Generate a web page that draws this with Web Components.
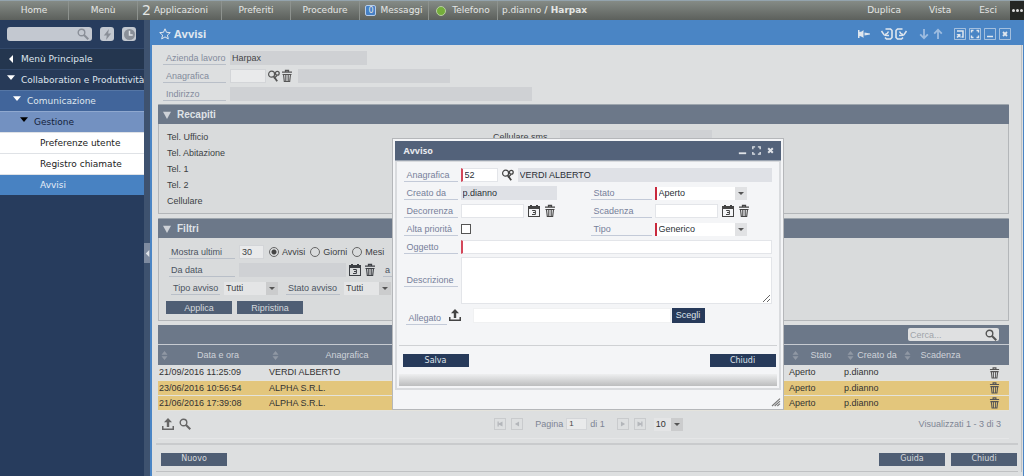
<!DOCTYPE html>
<html lang="it">
<head>
<meta charset="utf-8">
<title>Avvisi</title>
<style>
body { margin: 0; background: #dddfe0; font: 9px/12px "Liberation Sans", Arial, sans-serif; }
</style>
</head>
<body>
<crm-app></crm-app>
<script>
const base = `
*, *::before, *::after { box-sizing: border-box; }
:host([hidden]) { display: none; }
button, input, select, textarea { font: inherit; color: inherit; margin: 0; padding: 0; border: 0; border-radius: 0; }
button { background: none; display: inline-flex; align-items: center; justify-content: center; }
a { color: inherit; text-decoration: none; }
`;

const controls = `
.row { display: flex; align-items: center; height: 18px; }
.lbl { display: block; flex: none; height: 14px; line-height: 15px; padding-left: 3px; color: #838b9c; border-bottom: 1px solid #b9bfc8; white-space: nowrap; }
.box { height: 14px; min-width: 0; padding: 0 2px; background: #e9eaeb; border: 1px solid #d3d5d8; }
.ro { background: #cfd1d4; border: 0; color: #444; }
.sel { position: relative; display: inline-grid; grid-template-columns: 1fr 12px; height: 13px; background: #e4e5e6; align-items: center; }
.sel select { grid-area: 1 / 1 / 2 / 3; appearance: none; background: none; height: 13px; padding-left: 2px; line-height: 13px; }
.sel::after { content: ""; grid-area: 1 / 2; height: 13px; pointer-events: none; background: #cbcccd; }
.sel::before { content: ""; position: absolute; right: 3px; top: 5px; border: 3px solid transparent; border-top-color: #555; border-bottom: 0; pointer-events: none; z-index: 1; }
.btn { width: 66px; height: 13px; background: #4f5e74; color: #d6d9dd; font: 9px/12px "Liberation Sans", Arial, sans-serif; }
`;

function define(name, css, html, setup) {
  const tpl = document.createElement('template');
  tpl.innerHTML = `<style>${base}${css}</style>${html}`;
  customElements.define(name, class extends HTMLElement {
    constructor() {
      super();
      this.attachShadow({ mode: 'open' }).append(tpl.content.cloneNode(true));
    }
    connectedCallback() { if (setup) setup(this, this.shadowRoot); }
  });
}

const icons = {
  search: '<g fill="none" stroke="currentColor"><circle cx="4.5" cy="4.5" r="3.3" stroke-width="1.4"/><path d="M7 7l4.3 4.3" stroke-width="2"/></g>',
  lookup: '<g fill="none" stroke="currentColor"><circle cx="3.600" cy="4.200" r="3" stroke-width="1.2"/><path d="M5.800 6.400l3.400 4.800" stroke-width="1.800"/><path d="M6 8.500l3-3" stroke-width="1.200"/><circle cx="9.300" cy="3.300" r="1.900" stroke-width="1.3"/></g>',
  trash: '<g fill="none" stroke="currentColor"><path d="M4.500 1.500v-1h3v1M1 2.200h10" stroke-width="1.300"/><path d="M1.500 4.500h9M2.500 4.500l.8 7h5.400l.8-7M4.800 5v6M7.200 5v6" stroke-width="1.100"/></g>',
  calendar: '<path fill="currentColor" fill-rule="evenodd" d="M0 1h2V0h2v1h4V0h2v1h2v11H0zM1 4v7h10V4z"/><path d="M4.200 5.500h3.200v4H4M5 7.500h2.200" fill="none" stroke="currentColor" stroke-width="1"/>',
  upload: '<path fill="currentColor" d="M6 0l4 4.300H7.200V9H4.800V4.300H2zM0 8h1.500v2.500h9V8H12v4H0z"/>',
  star: '<path d="M6 .8l1.500 3.500 3.800.3-2.900 2.500.9 3.800L6 8.900l-3.300 2 .9-3.800L.7 4.600l3.800-.3z" fill="none" stroke="currentColor"/>',
  bolt: '<path d="M7.500 0L2 7h3.200L4.500 12 10 5H6.700z" fill="currentColor"/>',
  clock: '<circle cx="6" cy="6" r="6" fill="currentColor"/><path d="M6 2v4.500h3.500" fill="none" stroke="#dfe3e8" stroke-width="1.600"/>',
  pin: '<path d="M0 2h1.500v2C3 4 4.500 3 5.500 2v8C4.500 9 3 8 1.500 8v2H0zM6.500 4.500l5.500 1v1l-5.500 1z" fill="currentColor"/>',
  undo: '<path d="M4.500 1h5l1.500 1.500v7L9.500 11h-4L4 9.500" fill="none" stroke="currentColor" stroke-width="1.600"/><path d="M7.500 3.500Q6.500 6 4 6.500M.5 3l2.800 4.200M3.300 7.200L8 7.400" fill="none" stroke="currentColor" stroke-width="1.500"/>',
  redo: '<path d="M7.500 1h-5L1 2.500v7L2.500 11h4L8 9.500" fill="none" stroke="currentColor" stroke-width="1.600"/><path d="M4.500 3.500Q5.500 6 8 6.500M11.500 3L8.700 7.200M8.700 7.200L4 7.400" fill="none" stroke="currentColor" stroke-width="1.500"/>',
  down: '<path d="M6 1v9M2.200 6.300L6 10.300l3.800-4" fill="none" stroke="currentColor" stroke-width="1.800"/>',
  up: '<path d="M6 11V2M2.200 5.700L6 1.700l3.800 4" fill="none" stroke="currentColor" stroke-width="1.800"/>',
  restore: '<path d="M.5.5h11v11H.500z" fill="none" stroke="currentColor" opacity=".6"/><path d="M3 3h6v6H7.500" fill="none" stroke="currentColor" stroke-width="1.500"/><path d="M2.500 6h4v4l-1.400-1.200L3.600 10l-1.100-1 1.300-1.500z" fill="currentColor"/>',
  maximize: '<path d="M.5.5h11v11H.500z" fill="none" stroke="currentColor" opacity=".6"/><path d="M2.500 4.500v-2h2m3 0h2v2m0 3v2h-2m-3 0h-2v-2" fill="none" stroke="currentColor" stroke-width="1.400"/>',
  minimize: '<path d="M.5.5h11v11H.500z" fill="none" stroke="currentColor" opacity=".6"/><path d="M3 8.500h6" stroke="currentColor" stroke-width="1.500"/>',
  close: '<path d="M.5.5h11v11H.500z" fill="none" stroke="currentColor" opacity=".6"/><path d="M4 4l4 4M8 4L4 8" stroke="currentColor" stroke-width="1.800"/>',
  dmin: '<path d="M2 9h8" stroke="currentColor" stroke-width="2"/>',
  dmax: '<path d="M2 4.500V2h2.500m3 0H10v2.500m0 3V10H7.500m-3 0H2V7.500" fill="none" stroke="currentColor" stroke-width="1.500"/>',
  dclose: '<path d="M3.500 3.500l5 5M8.500 3.500l-5 5" stroke="currentColor" stroke-width="2.200"/>',
  triLeft: '<path d="M9 0v12L3 6z" fill="currentColor"/>',
  triDown: '<path d="M0 2h12L6 9z" fill="currentColor"/>',
  section: '<path d="M0 1h12L6 12z" fill="currentColor"/>',
  first: '<path d="M3 3h1.500v2.500L9 3v6L4.500 6.500V9H3z" fill="currentColor"/>',
  prev: '<path d="M8.500 3v6L3.500 6z" fill="currentColor"/>',
  next: '<path d="M3.500 3v6l5-3z" fill="currentColor"/>',
  last: '<path d="M9 3H7.500v2.500L3 3v6l4.500-2.500V9H9z" fill="currentColor"/>',
  sort: '<path d="M6 0l4 5H2zM6 12l4-5H2z" fill="currentColor"/>',
  grip: '<path d="M0 12L12 1M4 12l8-7.300M8 12l4-3.600" stroke="currentColor" stroke-width="1.700"/>'
};
define('crm-icon', `
:host { display: block; flex: none; width: 12px; height: 12px; }
svg { display: block; width: 100%; height: 100%; overflow: visible; }`,
'<svg viewBox="0 0 12 12" aria-hidden="true"></svg>',
(el, root) => { root.querySelector('svg').innerHTML = icons[el.getAttribute('name')] || ''; });

define('crm-topbar', `
:host { display: flex; height: 20px; border-top: 1px solid #93a3ad; background: linear-gradient(#858b86, #5c605c); color: #e4e6e4; font: 9px/19px "DejaVu Sans", Verdana, sans-serif; }
a { display: flex; align-items: center; justify-content: center; flex: none; width: 69px; border-right: 1px solid #8d928e; white-space: nowrap; }
a.wide { width: 84px; gap: 3px; justify-content: flex-start; padding-left: 4px; }
.wide span { font-size: 14px; }
.msg, .tel { gap: 4px; }
.msg span { width: 11px; height: 11px; border: 1px solid #b5cdea; border-radius: 2px; background: #4680c6; font: 8px/9px "DejaVu Sans", sans-serif; text-align: center; }
.tel { gap: 6px; }
.tel i { width: 10px; height: 10px; border-radius: 50%; background: #75ad3b; border: 1px solid #b7cfa0; }
.user { padding-left: 4px; white-space: pre; }
nav { display: flex; margin-left: auto; gap: 28px; padding-right: 13px; }
nav a { width: auto; border: 0; }
.more { width: 14px; background: #242624; gap: 1px; }
.more i { width: 3px; height: 3px; border-radius: 50%; background: #ddd; }`,
`<a href="#home">Home</a><a href="#menu">Menù</a><a class="wide" href="#app"><span>2</span>Applicazioni</a><a href="#pref">Preferiti</a><a href="#proc">Procedure</a><a class="msg" href="#msg"><span>0</span>Messaggi</a><a class="tel" href="#tel"><i></i>Telefono</a>
<div class="user">p.dianno<b> / Harpax</b></div>
<nav><a href="#dup">Duplica</a><a href="#vista">Vista</a><a href="#esci">Esci</a></nav>
<button class="more" aria-label="Altro"><i></i><i></i><i></i></button>`);

define('crm-sidebar', `
:host { display: block; flex: none; width: 144px; background: #273c5d; color: #dfe5ee; font: 9px/20px "DejaVu Sans", Verdana, sans-serif; }
form { display: flex; align-items: center; height: 28px; padding-left: 7px; gap: 8px; color: #8a8f98; }
label { display: flex; align-items: center; width: 85px; height: 14px; padding-right: 3px; background: #c3c8d0; border-radius: 3px; }
input { flex: 1; min-width: 0; height: 14px; background: none; }
button { width: 14px; height: 14px; background: #c3c8d0; border-radius: 3px; }
button crm-icon { width: 11px; height: 11px; }
a { display: flex; align-items: center; height: 21px; border-top: 1px solid #32486a; white-space: nowrap; }
a crm-icon { width: 8px; height: 8px; margin: 0 6px 4px 7px; color: #fff; }
a.l0 { background: #24364f; } a.l0 crm-icon { margin-bottom: 0; }
a.l1 { background: #273a58; }
a.l2 { background: #41659b; padding-left: 6px; border-color: #5576a5; }
a.l3 { background: #7391c1; padding-left: 13px; color: #15233c; border-color: #8fa8cf; }
a.l3 crm-icon { color: #000; }
a.l4 { background: #fff; color: #222; padding-left: 40px; border-color: #dfe2e6; }
a.on { background: #4882c2; color: #e3ecf7; }`,
`<form><label aria-label="Cerca nel menù"><input type="text"><crm-icon name="search"></crm-icon></label><button type="button" aria-label="Azioni rapide"><crm-icon name="bolt"></crm-icon></button><button type="button" aria-label="Recenti"><crm-icon name="clock"></crm-icon></button></form>
<nav>
<a class="l0" href="#mp"><crm-icon name="triLeft"></crm-icon>Menù Principale</a>
<a class="l1" href="#cp"><crm-icon name="triDown"></crm-icon>Collaboration e Produttività</a>
<a class="l2" href="#co"><crm-icon name="triDown"></crm-icon>Comunicazione</a>
<a class="l3" href="#ge"><crm-icon name="triDown"></crm-icon>Gestione</a>
<a class="l4" href="#pu">Preferenze utente</a>
<a class="l4" href="#rc">Registro chiamate</a>
<a class="l4 on" href="#av">Avvisi</a>
</nav>`);

define('crm-splitter', `
:host { display: flex; align-items: center; flex: none; width: 8px; padding-top: 10px; background: #3e526f; border-right: 2px solid #4a85c5; }
button { width: 6px; height: 20px; background: #7e8ba0; color: #dfe3e8; }
crm-icon { width: 7px; height: 7px; }`,
'<button aria-label="Chiudi menù"><crm-icon name="triLeft"></crm-icon></button>');

define('crm-titlebar', `
:host { display: flex; align-items: center; height: 25px; padding: 2px 12px 0 7px; background: #4a85c5; color: #dfe6ee; }
h1 { flex: 1; margin: 0 0 0 3px; font: bold 11px/20px "Noto Sans", sans-serif; }
div { display: flex; gap: 3px; }
.tools { gap: 2px; margin: 0 11px; }
.arrows { gap: 2px; margin-right: 10px; color: #9dbce0; }
button { height: 12px; }`,
`<crm-icon name="star"></crm-icon><h1>Avvisi</h1>
<button aria-label="Fissa"><crm-icon name="pin"></crm-icon></button>
<div class="tools"><button aria-label="Annulla"><crm-icon name="undo"></crm-icon></button><button aria-label="Ripeti"><crm-icon name="redo"></crm-icon></button></div>
<div class="arrows"><button aria-label="Giù"><crm-icon name="down"></crm-icon></button><button aria-label="Su"><crm-icon name="up"></crm-icon></button></div>
<div><button aria-label="Ripristina"><crm-icon name="restore"></crm-icon></button><button aria-label="Ingrandisci"><crm-icon name="maximize"></crm-icon></button><button aria-label="Riduci"><crm-icon name="minimize"></crm-icon></button><button aria-label="Chiudi"><crm-icon name="close"></crm-icon></button></div>`);

define('crm-head-form', `${controls}
:host { display: block; padding: 4px 0 1px 5px; color: #555; }
.lbl { width: 63px; margin-right: 4px; }
.w1 { width: 137px; } .w2 { width: 36px; } .w3 { width: 152px; margin-left: 5px; } .w4 { width: 302px; }
button { margin-left: 2px; }
button + button { margin-left: 1px; }`,
`<div class="row"><label class="lbl" for="az">Azienda lavoro</label><input class="box ro w1" id="az" value="Harpax" readonly></div>
<div class="row"><label class="lbl" for="an">Anagrafica</label><input class="box w2" id="an"><button aria-label="Cerca anagrafica"><crm-icon name="lookup"></crm-icon></button><button aria-label="Svuota"><crm-icon name="trash"></crm-icon></button><input class="box ro w3" aria-label="Nome" readonly></div>
<div class="row"><label class="lbl" for="in">Indirizzo</label><input class="box ro w4" id="in" readonly></div>`);

define('crm-panel', `
:host { display: block; margin-bottom: 4px; background: #d9dbdc; border: 1px solid #b3b6b9; border-top-color: #9da5ad; }
h2 { display: flex; align-items: center; height: 19px; margin: 0 -1px; padding-left: 5px; gap: 6px; background: #6c7889; color: #dfe2e6; font: bold 10px/19px "Liberation Sans", Arial, sans-serif; }
crm-icon { width: 8px; height: 8px; color: #ced2d8; }`,
`<h2><crm-icon name="section"></crm-icon><slot name="title"></slot></h2><slot></slot>`);

define('crm-contacts', `${controls}
:host { display: grid; grid-template-columns: 326px 1fr; padding: 5px 8px 4px; color: #3c3f44; line-height: 16px; }
.sms { display: flex; align-items: center; }
label { width: 67px; white-space: nowrap; }
.box { width: 152px; }`,
`<div><div>Tel. Ufficio</div><div>Tel. Abitazione</div><div>Tel. 1</div><div>Tel. 2</div><div>Cellulare</div></div>
<div><div class="sms"><label for="sms">Cellulare sms</label><input class="box ro" id="sms" readonly></div></div>`);

define('crm-filters', `${controls}
:host { display: block; padding: 5px 7px; color: #3c3f44; }
.row { padding-left: 3px; }
.row.in { padding-left: 5px; }
.lbl { width: 66px; margin-right: 4px; padding-left: 2px; color: #4b5361; }
.lbl.s { width: 49px; } .lbl.m { width: 54px; margin-left: 8px; } .lbl.a { width: 30px; margin: 0 0 0 7px; }
.num { width: 25px; margin-right: 5px; }
.date { width: 107px; margin-right: 3px; }
input[type=radio] { appearance: none; width: 10px; height: 10px; border: 1px solid #666; border-radius: 50%; margin-right: 3px; }
input[type=radio]:checked { background: radial-gradient(#444 0 2px, transparent 3px); }
.r { display: flex; align-items: center; margin-right: 5px; }
.row button + button { margin-left: 3px; }
.sel.a1 { width: 54px; } .sel.a2 { width: 47px; }
.act { display: flex; gap: 5px; margin-top: 4px; padding-bottom: 1px; }`,
`<div class="row"><label class="lbl" for="mu">Mostra ultimi</label><input class="box num" id="mu" value="30"><label class="r"><input type="radio" name="u" checked>Avvisi</label><label class="r"><input type="radio" name="u">Giorni</label><label class="r"><input type="radio" name="u">Mesi</label></div>
<div class="row"><label class="lbl" for="dd">Da data</label><input class="box ro date" id="dd" readonly><button aria-label="Calendario"><crm-icon name="calendar"></crm-icon></button><button aria-label="Svuota"><crm-icon name="trash"></crm-icon></button><span class="lbl a">a</span></div>
<div class="row in"><label class="lbl s" for="ta">Tipo avviso</label><span class="sel a1"><select id="ta"><option>Tutti</option></select></span><label class="lbl m" for="sa">Stato avviso</label><span class="sel a2"><select id="sa"><option>Tutti</option></select></span></div>
<div class="act"><button class="btn">Applica</button><button class="btn">Ripristina</button></div>`);

define('crm-notices', `${controls}
:host { display: block; color: #333; border-bottom: 1px solid #e5e6e7; }
.bar { display: flex; justify-content: flex-end; height: 20px; padding: 3px 10px 3px; background: #6c7889; border-bottom: 1px solid #c7cbd1; }
.bar label { display: flex; align-items: center; width: 91px; padding-right: 2px; background: #dfe0e1; border-radius: 2px; color: #555; }
.bar input { flex: 1; min-width: 0; height: 12px; padding-left: 2px; background: none; }
.bar input::placeholder { color: #a0a4aa; opacity: 1; }
table { width: 100%; border-collapse: collapse; table-layout: fixed; }
.c1 { width: 111px; } .c2 { width: 147px; } .c4 { width: 55px; } .c5 { width: 57px; } .c6 { width: 88px; } .c7 { width: 20px; }
th { height: 20px; padding: 0; background: #6c7889; color: #cfd3d9; font-weight: normal; white-space: nowrap; }
th div { display: flex; align-items: center; padding-left: 2px; }
th span { flex: 1; padding-right: 2px; }
th crm-icon { width: 9px; height: 9px; color: #9098a4; }
.c6 span { padding-right: 20px; }
td { height: 15px; padding: 1px 0 0; line-height: 13px; white-space: nowrap; border-bottom: 1px solid #e4e3dc; }
td:nth-child(1) { padding-left: 1px; }
td button { display: flex; }
td crm-icon { width: 11px; height: 12px; color: #555; }
tr.y td { background: #e3c67c; }
.foot { display: grid; grid-template-columns: 1fr auto 1fr; align-items: center; height: 27px; padding: 0 8px 0 4px; color: #7d8594; }
.foot > div { display: flex; align-items: center; gap: 5px; }
.foot > .pg { gap: 5px; padding-left: 14px; }
.pg button { width: 12px; height: 12px; border: 1px solid #c9cbcd; color: #b3b6ba; }
.pg crm-icon { width: 10px; height: 10px; }
.pg .box { width: 21px; height: 12px; color: #444; font-size: 8px; }
.pg label { display: flex; align-items: center; gap: 3px; margin: 0 7px; }
.pg .sel { width: 29px; color: #333; margin-left: 3px; }
.up, .up + button { color: #666; }
.tot { justify-content: flex-end; }`,
`<div class="bar"><label aria-label="Cerca"><input placeholder="Cerca..."><crm-icon name="search"></crm-icon></label></div>
<table><thead><tr>
<th class="c1"><div><crm-icon name="sort"></crm-icon><span>Data e ora</span></div></th>
<th class="c2"><div><crm-icon name="sort"></crm-icon><span>Anagrafica</span></div></th>
<th></th>
<th class="c4"><div><crm-icon name="sort"></crm-icon><span>Stato</span></div></th>
<th class="c5"><div><crm-icon name="sort"></crm-icon><span>Creato da</span></div></th>
<th class="c6"><div><crm-icon name="sort"></crm-icon><span>Scadenza</span></div></th>
<th class="c7"></th></tr></thead><tbody></tbody></table>
<div class="foot"><div><button class="up" aria-label="Esporta"><crm-icon name="upload"></crm-icon></button><button aria-label="Cerca"><crm-icon name="search"></crm-icon></button></div>
<div class="pg"><button aria-label="Prima"><crm-icon name="first"></crm-icon></button><button aria-label="Precedente"><crm-icon name="prev"></crm-icon></button><label>Pagina <input class="box" value="1"> di 1</label><button aria-label="Successiva"><crm-icon name="next"></crm-icon></button><button aria-label="Ultima"><crm-icon name="last"></crm-icon></button><span class="sel"><select aria-label="Righe"><option>10</option></select></span></div>
<div class="tot">Visualizzati 1 - 3 di 3</div></div>`,
(el, root) => {
  const rows = [['21/09/2016 11:25:09', 'VERDI ALBERTO', ''], ['23/06/2016 10:56:54', 'ALPHA S.R.L.', 'y'], ['21/06/2016 17:39:08', 'ALPHA S.R.L.', 'y']];
  root.querySelector('tbody').innerHTML = rows.map(([d, n, c]) => `<tr class="${c}"><td>${d}</td><td>${n}</td><td></td><td>Aperto</td><td>p.dianno</td><td></td><td><button aria-label="Elimina"><crm-icon name="trash"></crm-icon></button></td></tr>`).join('');
});

define('crm-actions', `${controls}
:host { display: flex; gap: 6px; margin: 4px 3px 0 4px; padding: 8px 1px 5px 5px; border-top: 2px solid #c9cbcd; border-bottom: 1px solid #bfc1c3; }
.btn { font-family: "DejaVu Sans", Verdana, sans-serif; font-size: 8px; }
.btn:first-of-type { margin-right: auto; }`,
'<button class="btn">Nuovo</button><button class="btn">Guida</button><button class="btn">Chiudi</button>');

define('crm-dialog', `${controls}
:host { display: block; padding: 2px; background: #f4f5f7; border: 1px solid #b5b7ba; color: #2b2f36; }
header { display: flex; align-items: center; height: 20px; padding: 0 5px 0 9px; gap: 3px; background: #53627a; color: #e8eaee; border-bottom: 1px solid #9aa3b0; }
h2 { flex: 1; margin: 0; font: bold 9px/18px "Noto Sans", sans-serif; }
header crm-icon { width: 11px; height: 11px; }
main { border: 2px solid #d9dbde; border-top-width: 1px; padding: 4px 2px 2px; }
.lbl { color: #76809a; border-color: #c3cad8; }
.box { background: #fff; border-color: #e3e5e9; }
.ro { background: #dfe1e6; color: #2b2f36; }
.req { border-left: 2px solid #d4475a; }
.form { padding: 0 5px; }
.r { display: grid; grid-template-columns: 54px 127px 61px 1fr; align-items: center; height: 18px; column-gap: 3px; }
.r > .wide { grid-column: 2 / 5; }
.r > div { display: flex; align-items: center; gap: 4px; }
.n { width: 37px; } .f { flex: 1; } .c { width: 96px; } .d { width: 63px; }
.sel { width: 92px; background: #fff; border-left: 2px solid #c9283c; }
.sel::after { background: #e1e2e4; }
input[type=checkbox] { appearance: none; width: 10px; height: 10px; border: 1px solid #555; background: #fff; }
.r.t { height: 48px; }
textarea.box { width: 100%; height: 47px; resize: vertical; }
.al { display: flex; align-items: center; margin: 3px 0 0 2px; height: 16px; }
.al .lbl { width: 41px; margin: 5px 2px 0 0; }
.al .box { width: 198px; height: 15px; margin: 0 1px 0 12px; border-color: #f0f1f2; }
.al .btn { width: 33px; height: 15px; }
.btn { background: #273a5a; color: #dfe3ea; }
.acts { display: flex; justify-content: space-between; margin-top: 22px; padding: 8px 1px 7px 4px; border-top: 1px solid #cfd1d4; }
.acts .btn { font-family: "DejaVu Sans", Verdana, sans-serif; font-size: 8px; }
.prog { height: 12px; background: linear-gradient(#eeeff0, #bcbdbe); }
footer { display: flex; justify-content: flex-end; align-items: flex-end; height: 17px; padding: 0 1px 1px 0; }
footer crm-icon { width: 8px; height: 8px; }
crm-icon { color: #444; } header crm-icon { color: #e0e3e8; } footer crm-icon { color: #777; }`,
`<header><h2>Avviso</h2><button aria-label="Riduci"><crm-icon name="dmin"></crm-icon></button><button aria-label="Ingrandisci"><crm-icon name="dmax"></crm-icon></button><button aria-label="Chiudi"><crm-icon name="dclose"></crm-icon></button></header>
<main><div class="form">
<div class="r"><label class="lbl" for="a">Anagrafica</label><div class="wide"><input class="box req n" id="a" value="52"><button aria-label="Cerca anagrafica"><crm-icon name="lookup"></crm-icon></button><input class="box ro f" aria-label="Nome" value="VERDI ALBERTO" readonly></div></div>
<div class="r"><label class="lbl" for="b">Creato da</label><div><input class="box ro c" id="b" value="p.dianno" readonly></div><label class="lbl" for="s">Stato</label><div><span class="sel"><select id="s"><option>Aperto</option></select></span></div></div>
<div class="r"><label class="lbl" for="d">Decorrenza</label><div><input class="box d" id="d"><button aria-label="Calendario"><crm-icon name="calendar"></crm-icon></button><button aria-label="Svuota"><crm-icon name="trash"></crm-icon></button></div><label class="lbl" for="e">Scadenza</label><div><input class="box d" id="e"><button aria-label="Calendario"><crm-icon name="calendar"></crm-icon></button><button aria-label="Svuota"><crm-icon name="trash"></crm-icon></button></div></div>
<div class="r"><label class="lbl" for="p">Alta priorità</label><div><input type="checkbox" id="p"></div><label class="lbl" for="t">Tipo</label><div><span class="sel"><select id="t"><option>Generico</option></select></span></div></div>
<div class="r"><label class="lbl" for="o">Oggetto</label><div class="wide"><input class="box req f" id="o"></div></div>
<div class="r t"><label class="lbl" for="x">Descrizione</label><div class="wide"><textarea class="box" id="x"></textarea></div></div>
<div class="al"><label class="lbl" for="g">Allegato</label><crm-icon name="upload"></crm-icon><input class="box" id="g"><button class="btn">Scegli</button></div>
</div>
<div class="acts"><button class="btn">Salva</button><button class="btn">Chiudi</button></div>
<div class="prog"></div></main>
<footer><crm-icon name="grip"></crm-icon></footer>`);

define('crm-app', `
:host { display: flex; flex-direction: column; min-height: 100vh; }
.body { display: flex; flex: 1; }
.main { position: relative; flex: 1; min-width: 0; border-right: 1px solid #4a85c5; }
.sheet { margin-right: 1px; border-right: 1px solid #bfc1c3; }
crm-panel, crm-notices { margin-left: 6px; margin-right: 12px; }
crm-head-form { padding-left: 11px; }
crm-dialog { position: absolute; top: 118px; left: 0; right: 0; width: 392px; margin: 0 auto; }`,
`<crm-topbar></crm-topbar><div class="body"><crm-sidebar></crm-sidebar><crm-splitter></crm-splitter>
<div class="main"><crm-titlebar></crm-titlebar><div class="sheet"><crm-head-form></crm-head-form>
<crm-panel><span slot="title">Recapiti</span><crm-contacts></crm-contacts></crm-panel>
<crm-panel><span slot="title">Filtri</span><crm-filters></crm-filters></crm-panel>
<crm-notices></crm-notices><crm-actions></crm-actions></div><crm-dialog role="dialog" aria-label="Avviso"></crm-dialog></div></div>`);
</script>
</body>
</html>
